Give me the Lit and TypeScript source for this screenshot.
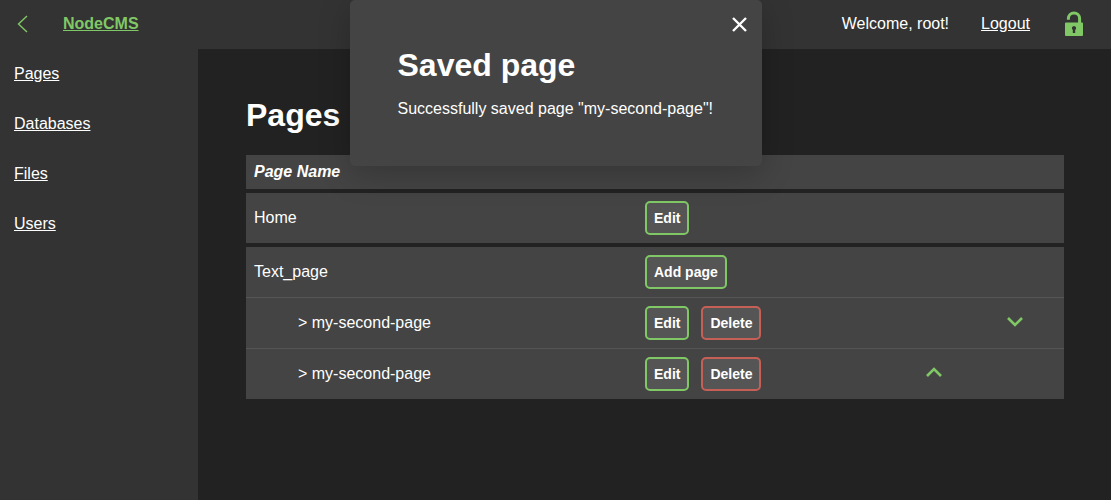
import { LitElement, html, css, nothing } from "lit";
import { customElement, state } from "lit/decorators.js";

interface PageRow {
  name: string;
  child?: boolean;
  actions: { label: string; danger?: boolean }[];
  move?: "up" | "down";
}

const ROWS: PageRow[] = [
  { name: "Home", actions: [{ label: "Edit" }] },
  { name: "Text_page", actions: [{ label: "Add page" }] },
  {
    name: "> my-second-page",
    child: true,
    actions: [{ label: "Edit" }, { label: "Delete", danger: true }],
    move: "down",
  },
  {
    name: "> my-second-page",
    child: true,
    actions: [{ label: "Edit" }, { label: "Delete", danger: true }],
    move: "up",
  },
];

const SECTIONS = ["Pages", "Databases", "Files", "Users"];

@customElement("app-root")
export class AppRoot extends LitElement {
  @state() private dialogOpen = true;

  static styles = css`
    :host {
      display: flex;
      flex-direction: column;
      min-height: 100vh;
      background: #222;
      color: #fff;
      font: 16px/18px "Liberation Sans", Arial, sans-serif;
    }
    * {
      box-sizing: border-box;
    }
    h1,
    p {
      margin: 0;
    }
    h1 {
      font-size: 32px;
      line-height: 37px;
    }
    a {
      color: inherit;
    }
    svg {
      display: block;
      fill: none;
      stroke: currentColor;
    }
    button {
      margin: 0;
      color: inherit;
      font: inherit;
      cursor: pointer;
    }
    .bar {
      display: flex;
      align-items: center;
      gap: 32px;
      height: 49px;
      padding: 0 24px 2px 14px;
      background: #333;
    }
    .back,
    .brand,
    .lock {
      color: #80c866;
    }
    .brand {
      font-weight: bold;
      margin-right: auto;
    }
    .back {
      width: 17px;
    }
    .lock {
      width: 25px;
    }
    .body {
      display: flex;
      flex: 1;
    }
    .side {
      flex: none;
      width: 198px;
      padding-left: 14px;
      background: #333;
    }
    .side ul {
      margin: 0;
      padding: 0;
      list-style: none;
    }
    .side li {
      display: flex;
      align-items: center;
      height: 50px;
    }
    main {
      flex: 1;
      padding: 48px 47px 48px 48px;
    }
    main h1 {
      margin-bottom: 21px;
    }
    table {
      width: 100%;
      table-layout: fixed;
      border-spacing: 0;
    }
    .c-name {
      width: 47.8%;
    }
    .c-move {
      width: 81px;
    }
    th,
    td {
      padding: 8px;
      background: #444;
      text-align: left;
    }
    th {
      font-style: italic;
    }
    td {
      border-top: 1px solid #555;
    }
    .group td {
      border-top: 4px solid #222;
    }
    .child td:first-child {
      padding-left: 52px;
    }
    .actions {
      display: flex;
      gap: 12px;
    }
    .btn {
      padding: 7px;
      border: 2px solid #80c866;
      border-radius: 5px;
      background: #555;
      font-size: 14px;
      line-height: 16px;
      font-weight: bold;
    }
    .danger {
      border-color: #c65f55;
    }
    .move {
      display: flex;
      justify-content: center;
      width: 48px;
      padding: 0;
      border: 0;
      background: none;
      color: #80c866;
    }
    .dialog {
      position: absolute;
      top: 0;
      left: 0;
      right: 0;
      width: fit-content;
      min-width: 412px;
      margin: 0 auto;
      padding: 47px 48px 48px;
      border-radius: 5px;
      background: #444;
      box-shadow: 0 8px 32px rgba(0, 0, 0, 0.22);
      white-space: nowrap;
    }
    .dialog h1 {
      margin-bottom: 16px;
    }
    .close {
      position: absolute;
      top: 12px;
      right: 10px;
      padding: 0;
      border: 0;
      background: none;
    }
  `;

  private arrow(direction: "up" | "down") {
    const path = direction === "down" ? "M5 7l7 7 7-7" : "M5 14l7-7 7 7";
    return html`<button class="move" aria-label="Move ${direction}">
      <svg width="24" height="24" viewBox="0 0 24 24" stroke-width="2.6">
        <path d=${path} />
      </svg>
    </button>`;
  }

  private row(row: PageRow) {
    return html`<tr class=${row.child ? "child" : "group"}>
      <td>${row.name}</td>
      <td>
        <div class="actions">
          ${row.actions.map(
            (a) =>
              html`<button class="btn ${a.danger ? "danger" : ""}">${a.label}</button>`
          )}
        </div>
      </td>
      <td>${row.move === "up" ? this.arrow("up") : nothing}</td>
      <td>${row.move === "down" ? this.arrow("down") : nothing}</td>
    </tr>`;
  }

  render() {
    return html`
      <header class="bar">
        <a class="back" href="#back" aria-label="Back">
          <svg width="17" height="18" viewBox="0 0 17 18" stroke-width="1.4">
            <path d="M13 1L4.500 9L13 17" />
          </svg>
        </a>
        <a class="brand" href="#home">NodeCMS</a>
        <span>Welcome, root!</span>
        <a href="#logout">Logout</a>
        <svg class="lock" width="25" height="26" viewBox="0 0 25 26">
          <path d="M6.400 8.800V7.500a5.600 5.600 0 0 1 11.200 0V13" stroke-width="3" />
          <path
            d="M4 11.500H20Q21 11.500 21 12.500V24Q21 25 20 25H4Q3 25 3 24V12.500Q3 11.500 4 11.500Z M12 15a2.200 2.200 0 0 0-1.200 4V22H13.200V19A2.200 2.200 0 0 0 12 15Z"
            fill="currentColor"
            fill-rule="evenodd"
            stroke="none"
          />
        </svg>
      </header>
      <div class="body">
        <nav class="side">
          <ul>
            ${SECTIONS.map(
              (s) => html`<li><a href="#${s.toLowerCase()}">${s}</a></li>`
            )}
          </ul>
        </nav>
        <main>
          <h1>Pages</h1>
          <table>
            <colgroup>
              <col class="c-name" />
              <col />
              <col class="c-move" />
              <col class="c-move" />
            </colgroup>
            <thead>
              <tr>
                <th colspan="4">Page Name</th>
              </tr>
            </thead>
            <tbody>
              ${ROWS.map((r) => this.row(r))}
            </tbody>
          </table>
        </main>
      </div>
      ${this.dialogOpen
        ? html`<section class="dialog" role="dialog" aria-labelledby="dialog-title">
            <button
              class="close"
              aria-label="Close"
              @click=${() => (this.dialogOpen = false)}
            >
              <svg width="24" height="24" viewBox="0 0 24 24" stroke-width="2.4">
                <path d="M5 6l13 13M18 6l-13 13" />
              </svg>
            </button>
            <h1 id="dialog-title">Saved page</h1>
            <p>Successfully saved page "my-second-page"!</p>
          </section>`
        : nothing}
    `;
  }
}
